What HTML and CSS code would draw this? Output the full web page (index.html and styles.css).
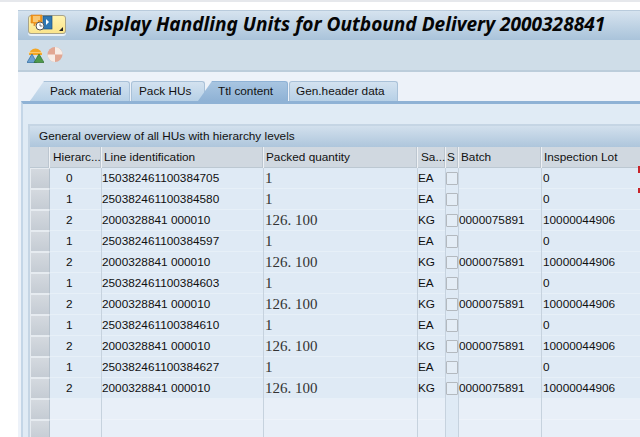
FILE: index.html
```html
<!DOCTYPE html>
<html lang="en">
<head>
<meta charset="utf-8">
<title>Display Handling Units</title>
<link rel="stylesheet" href="styles.css">
</head>
<body>
<div class="window">
  <header class="titlebar">
    <div class="menu-btn">
      <svg width="28" height="18" viewBox="0 0 28 18">
        <path d="M2 1h11v8H7l-2 3V9H2z" fill="#f39a1e" stroke="#d9791a" stroke-width=".6"/>
        <path d="M4 3h7M4 5h7M4 7h5" stroke="#fff3c8" stroke-width="1"/>
        <rect x="14" y="2" width="9" height="13" fill="#2f78b4" stroke="#1d4f80" stroke-width=".7"/>
        <path d="M17 5l3 3-3 3z" fill="#fff"/>
        <circle cx="11" cy="12" r="4" fill="#fff" stroke="#555" stroke-width="1"/>
        <path d="M11 9.500V12h2.500" stroke="#555" fill="none" stroke-width=".8"/>
      </svg>
      <span class="menu-arrow"></span>
    </div>
    <h1 class="title">Display Handling Units for Outbound Delivery 2000328841</h1>
  </header>
  <div class="toolbar">
    <svg width="17" height="17" viewBox="0 0 17 17">
      <path d="M2 9a6.500 6.500 0 0 1 13 0z" fill="#f5a623"/>
      <path d="M1 6.500h15" stroke="#fde3a8" stroke-width=".6"/>
      <path d="M0 16.500L5 8l4.500 8.500z" fill="#6ba0cf" stroke="#2e6a9e" stroke-width=".7"/>
      <path d="M7 16.500L12 8l5 8.500z" fill="#4f9a4a" stroke="#2f7030" stroke-width=".7"/>
    </svg>
    <svg width="17" height="17" viewBox="0 0 17 17">
      <circle cx="8" cy="8.500" r="7.500" fill="#e2a793"/>
      <path d="M8 1a7.500 7.500 0 0 1 7.500 7.500H8zM8 8.500H.5A7.500 7.500 0 0 0 8 16z" fill="#f7ece6"/>
    </svg>
  </div>
  <main class="content">
    <nav class="tabs">
      <div class="tab tab-first">Pack material</div>
      <div class="tab tab-second">Pack HUs</div>
      <div class="tab tab-active">Ttl content</div>
      <div class="tab tab-last">Gen.header data</div>
    </nav>
    <section class="panel">
      <div class="table-box">
        <div class="table-title">General overview of all HUs with hierarchy levels</div>
        <div class="grid header">
          <div class="sel"></div>
          <div>Hierarc...</div>
          <div>Line identification</div>
          <div>Packed quantity</div>
          <div>Sa...</div>
          <div class="s-head">S</div>
          <div>Batch</div>
          <div>Inspection Lot</div>
        </div>
        <div class="grid row"><div class="sel"></div><div class="lvl">0</div><div>150382461100384705</div><div class="qty">1</div><div>EA</div><div class="chk"><i></i></div><div></div><div class="lot">0</div></div>
        <div class="grid row"><div class="sel"></div><div class="lvl">1</div><div>250382461100384580</div><div class="qty">1</div><div>EA</div><div class="chk"><i></i></div><div></div><div class="lot">0</div></div>
        <div class="grid row"><div class="sel"></div><div class="lvl">2</div><div>2000328841 000010</div><div class="qty">126. 100</div><div>KG</div><div class="chk"><i></i></div><div>0000075891</div><div class="lot">10000044906</div></div>
        <div class="grid row"><div class="sel"></div><div class="lvl">1</div><div>250382461100384597</div><div class="qty">1</div><div>EA</div><div class="chk"><i></i></div><div></div><div class="lot">0</div></div>
        <div class="grid row"><div class="sel"></div><div class="lvl">2</div><div>2000328841 000010</div><div class="qty">126. 100</div><div>KG</div><div class="chk"><i></i></div><div>0000075891</div><div class="lot">10000044906</div></div>
        <div class="grid row"><div class="sel"></div><div class="lvl">1</div><div>250382461100384603</div><div class="qty">1</div><div>EA</div><div class="chk"><i></i></div><div></div><div class="lot">0</div></div>
        <div class="grid row"><div class="sel"></div><div class="lvl">2</div><div>2000328841 000010</div><div class="qty">126. 100</div><div>KG</div><div class="chk"><i></i></div><div>0000075891</div><div class="lot">10000044906</div></div>
        <div class="grid row"><div class="sel"></div><div class="lvl">1</div><div>250382461100384610</div><div class="qty">1</div><div>EA</div><div class="chk"><i></i></div><div></div><div class="lot">0</div></div>
        <div class="grid row"><div class="sel"></div><div class="lvl">2</div><div>2000328841 000010</div><div class="qty">126. 100</div><div>KG</div><div class="chk"><i></i></div><div>0000075891</div><div class="lot">10000044906</div></div>
        <div class="grid row"><div class="sel"></div><div class="lvl">1</div><div>250382461100384627</div><div class="qty">1</div><div>EA</div><div class="chk"><i></i></div><div></div><div class="lot">0</div></div>
        <div class="grid row"><div class="sel"></div><div class="lvl">2</div><div>2000328841 000010</div><div class="qty">126. 100</div><div>KG</div><div class="chk"><i></i></div><div>0000075891</div><div class="lot">10000044906</div></div>
        <div class="grid row empty"><div class="sel"></div><div></div><div></div><div></div><div></div><div class="chk"></div><div></div><div></div></div>
        <div class="grid row empty"><div class="sel"></div><div></div><div></div><div></div><div></div><div class="chk"></div><div></div><div></div></div>
      </div>
      <span class="red-mark red-a"></span>
      <span class="red-mark red-b"></span>
    </section>
  </main>
</div>
</body>
</html>
```
FILE: styles.css
```css
* { box-sizing: border-box; }
html, body { margin: 0; height: 437px; overflow: hidden; }
body {
  background: #fff;
  font-family: "Liberation Sans", Arial, sans-serif;
  font-size: 11.8px;
  color: #111;
  padding: 8px 0 0 18px;
  border-top: 2px solid #e6e8ec;
  position: relative;
}
.window { height: 427px; display: flex; flex-direction: column; }
.titlebar {
  height: 30px;
  flex: none;
  background: linear-gradient(#d6e3ef, #a9c3da);
  border-top: 1px solid #b9cbdc;
  display: flex;
  align-items: center;
  padding-left: 10px;
}
.menu-btn {
  width: 38px;
  height: 19px;
  margin-bottom: 3px;
  background: linear-gradient(#fff3b0, #fbe58c);
  border: 1px solid #a9a48a;
  border-radius: 3px;
  box-shadow: 0 2px 0 #e8f0f6;
  display: flex;
  align-items: flex-start;
  position: relative;
  flex: none;
}
.menu-btn svg { display: block; margin-top: -2px; }
.menu-arrow {
  position: absolute;
  right: 2px;
  bottom: 2px;
  width: 0;
  height: 0;
  border-left: 4px solid transparent;
  border-bottom: 4px solid #222;
}
.title {
  margin: 0 0 3px 19px;
  font-family: "Noto Sans", sans-serif;
  font-size: 19.1px;
  font-weight: bold;
  font-style: italic;
  color: #050505;
  white-space: nowrap;
  line-height: 24px;
}
.toolbar {
  height: 32px;
  flex: none;
  background: #cfdde8;
  border-bottom: 2px solid #bccddb;
  display: flex;
  align-items: center;
  gap: 3px;
  padding: 0 0 2px 9px;
}
.content {
  flex: 1;
  min-height: 0;
  background: #edf2f9;
  padding-top: 9px;
}
.tabs { display: flex; height: 20px; padding-left: 12px; }
.tab {
  height: 20px;
  line-height: 19px;
  background: linear-gradient(#d3e2f0, #b7d0e6);
  border: 1px solid #a9c1d8;
  border-bottom: 0;
  border-radius: 3px 3px 0 0;
  margin-right: 1px;
  white-space: nowrap;
}
.tab-first { width: 100px; padding-left: 19px; clip-path: polygon(14px 0, 100% 0, 100% 100%, 0 100%); }
.tab-second { width: 74px; padding-left: 7px; clip-path: polygon(0 0, 100% 0, 100% 100%, 0 100%); }
.tab-active {
  width: 90px;
  margin-left: -8px;
  padding-left: 19px;
  background: linear-gradient(#a8c5e1, #8fb2d5);
  border-color: #8fb2d5;
  clip-path: polygon(14px 0, 100% 0, 100% 100%, 0 100%);
}
.tab-last { width: 109px; padding-left: 6px; }
.panel {
  height: 338px;
  margin-left: 3px;
  background: #e0ebf5;
  border-top: 3px solid #8fb2d5;
  border-left: 2px solid #c4d6e7;
  padding: 20px 0 0 5px;
  position: relative;
  overflow: hidden;
}
.table-box { border-top: 2px solid #c5d5e4; border-left: 2px solid #c5d5e4; }
.table-title {
  height: 21px;
  line-height: 20px;
  padding-left: 9px;
  background: linear-gradient(#d2e0ed, #aec6dc);
  white-space: nowrap;
}
.grid {
  display: grid;
  grid-template-columns: 20px 52px 162px 154px 28px 13px 83px 100px;
  white-space: nowrap;
}
.header { height: 21px; line-height: 20px; background: #d0d8e0; border-bottom: 1px solid #bcc8d2; }
.header > div { padding-left: 2px; border-right: 1px solid #eef1f4; box-shadow: inset -1px 0 0 #bcc6d0; }
.header .sel { padding: 0; }
.header > div:nth-child(2) { padding-left: 3px; }
.header > div:nth-child(5) { padding-left: 3px; }
.header .s-head { padding-left: 1px; }
.row {
  height: 21px;
  line-height: 20px;
  background: #dfeaf5;
  border-bottom: 1px solid #e7f0f8;
}
.row > div { border-right: 1px solid #c6d2de; padding-left: 0; min-width: 0; }
.row > div:last-child { border-right: 0; }
.row .sel {
  background: linear-gradient(#d4d9df, #c5ccd4);
  border: 1px solid #e6ebf0;
  border-right: 1px solid #b5c1cc;
}
.sel { height: 21px; }
.lvl { text-align: left; padding-left: 16px !important; }
.qty {
  font-family: "Liberation Serif", serif;
  font-size: 15px;
  padding-left: 1px !important;
  color: #333;
}
.chk { display: flex; align-items: center; background: #dfeaf5; }
.chk i {
  display: block;
  width: 13px;
  height: 13px;
  background: #e4edf6;
  border: 1px solid #b3b9bf;
  border-radius: 1px;
}
.lot { padding-left: 1px !important; }
.empty { background: #e8eff8; border-bottom-color: #eef3fa; }
.empty .chk { background: #dfeaf5; }
.red-mark { position: absolute; right: 0; width: 2px; background: #c8242a; }
.red-a { top: 62px; height: 7px; }
.red-b { top: 84px; height: 5px; }
```
